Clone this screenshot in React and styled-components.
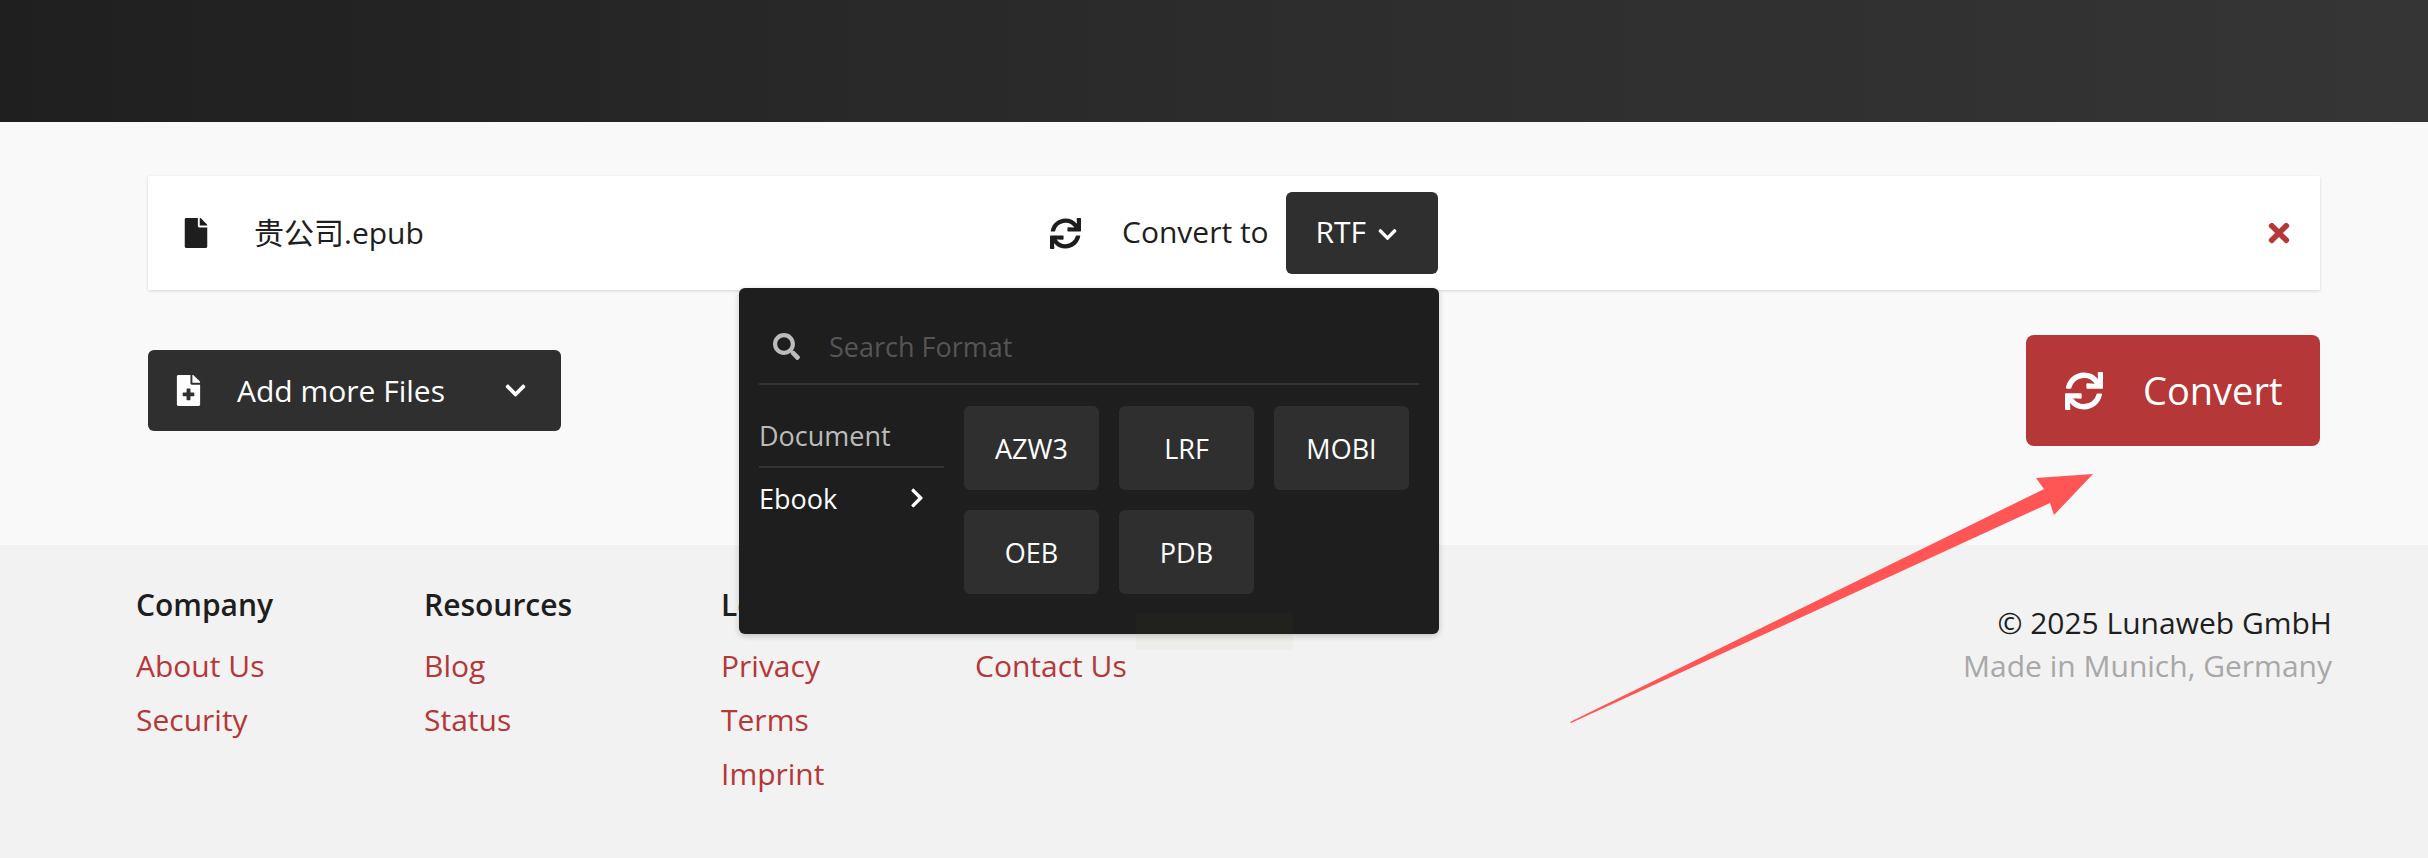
import React from "react";
import styled, { createGlobalStyle } from "styled-components";
import { FaFile, FaFileMedical, FaSync, FaChevronDown, FaChevronRight, FaSearch, FaTimes } from "react-icons/fa";

const Global = createGlobalStyle`
  html, body { margin: 0; padding: 0; }
  body {
    font-family: "Open Sans", "Noto Sans CJK SC", sans-serif;
    background: #f9f9f9;
    color: #1e1e1e;
    overflow: hidden;
  }
`;

const Page = styled.div`
  position: relative;
  width: 2428px;
  height: 858px;
  overflow: hidden;
  display: flex;
  flex-direction: column;
`;

const Header = styled.header`
  height: 122px;
  background: linear-gradient(90deg, #1f1f1f 0%, #2c2c2c 50%, #353535 100%);
`;

const Main = styled.main`
  height: 423px;
  padding: 54px 108px 0 148px;
  box-sizing: border-box;
  background: #f9f9f9;
`;

const FileRow = styled.div`
  display: flex;
  align-items: center;
  height: 114px;
  background: #fff;
  box-shadow: 0 1px 3px rgba(0, 0, 0, 0.14);
  padding: 0 26px 0 33px;
`;

const FileName = styled.div`
  display: flex;
  align-items: center;
  width: 869px;
  flex: none;
  gap: 43px;
  font-size: 30px;
  svg { font-size: 30px; flex: none; }
  span { padding-bottom: 5px; }
`;

const ConvertTo = styled.div`
  display: flex;
  align-items: center;
  font-size: 30px;
  > svg { font-size: 31px; margin-right: 41px; }
  > span { margin-right: 17px; padding-bottom: 4px; }
`;

const FormatButton = styled.button`
  display: flex;
  align-items: center;
  justify-content: center;
  gap: 11px;
  width: 152px;
  height: 82px;
  padding: 0 10px 3px 0;
  border: 0;
  border-radius: 6px;
  background: #2f2f2f;
  color: #fff;
  font: inherit;
  font-size: 30px;
  svg { font-size: 21px; margin-top: 5px; }
`;

const RemoveButton = styled.div`
  margin-left: auto;
  color: #b53737;
  font-size: 30px;
  line-height: 0;
`;

const Actions = styled.div`
  display: flex;
  justify-content: space-between;
  align-items: flex-start;
  margin-top: 45px;
`;

const AddButton = styled.button`
  display: flex;
  align-items: center;
  width: 413px;
  height: 81px;
  margin-top: 15px;
  padding: 0 34px 0 25px;
  box-sizing: border-box;
  border: 0;
  border-radius: 6px;
  background: #2f2f2f;
  color: #fff;
  font: inherit;
  font-size: 30px;
  > svg:first-child { font-size: 31px; margin-right: 33px; }
  > svg:last-child { font-size: 23px; margin-left: auto; }
`;

const ConvertButton = styled.button`
  display: flex;
  align-items: center;
  width: 294px;
  height: 111px;
  padding: 0 0 2px 39px;
  box-sizing: border-box;
  border: 0;
  border-radius: 8px;
  background: #b53737;
  color: #fff;
  font: inherit;
  font-size: 38px;
  svg { font-size: 38px; margin: 2px 40px 0 0; }
`;

const Menu = styled.div`
  position: absolute;
  left: 739px;
  top: 288px;
  width: 700px;
  height: 346px;
  padding: 0 20px;
  box-sizing: border-box;
  border-radius: 6px;
  background: #1e1e1e;
  box-shadow: 0 2px 6px rgba(0, 0, 0, 0.2);
  z-index: 2;
`;

const SearchRow = styled.div`
  display: flex;
  align-items: center;
  height: 97px;
  padding: 22px 0 0 14px;
  box-sizing: border-box;
  border-bottom: 2px solid #333;
  color: #555;
  font-size: 27px;
  svg { font-size: 27px; color: #bbb; margin-right: 29px; }
`;

const MenuBody = styled.div`
  display: flex;
  gap: 20px;
  padding-top: 21px;
`;

const Categories = styled.div`
  width: 185px;
  flex: none;
`;

const Category = styled.div`
  display: flex;
  align-items: center;
  justify-content: space-between;
  height: 62px;
  box-sizing: border-box;
  padding: 0 16px 2px 0;
  font-size: 27px;
  color: ${({ $active }) => ($active ? "#fff" : "#bbb")};
  border-bottom: ${({ $active }) => ($active ? "0" : "2px solid #333")};
  svg { font-size: 22px; }
`;

const Formats = styled.div`
  display: grid;
  grid-template-columns: repeat(3, 135px);
  grid-auto-rows: 84px;
  gap: 20px;
`;

const Format = styled.div`
  display: flex;
  align-items: center;
  justify-content: center;
  border-radius: 6px;
  background: #2f2f2f;
  color: #fff;
  font-size: 27px;
`;

const Footer = styled.footer`
  flex: 1;
  display: flex;
  justify-content: space-between;
  padding: 40px 96px 0 136px;
  background: #f2f2f2;
`;

const Columns = styled.div`
  display: flex;
`;

const Column = styled.div`
  width: ${({ $w }) => $w}px;
`;

const ColumnTitle = styled.div`
  font-size: 30px;
  font-weight: 600;
  line-height: 40px;
  margin-bottom: 14px;
`;

const FooterLink = styled.a`
  display: block;
  color: #b53737;
  font-size: 30px;
  line-height: 54px;
`;

const Legal = styled.div`
  padding-top: 17px;
  text-align: right;
  font-size: 30px;
  line-height: 42px;
  small { display: block; margin-top: 1px; font-size: inherit; color: #a8a8a8; }
`;

const GhostBadge = styled.div`
  position: absolute;
  left: 1136px;
  top: 613px;
  width: 157px;
  height: 37px;
  background: rgba(128, 128, 60, 0.04);
  z-index: 3;
`;

const Arrow = styled.svg`
  position: absolute;
  left: 0;
  top: 0;
  z-index: 3;
  pointer-events: none;
`;

const columns = [
  { title: "Company", w: 288, links: ["About Us", "Security"] },
  { title: "Resources", w: 297, links: ["Blog", "Status"] },
  { title: "Legal", w: 254, links: ["Privacy", "Terms", "Imprint"] },
  { title: "Support", w: 200, links: ["Contact Us"] },
];

export default function App() {
  return (
    <Page>
      <Global />
      <Header />
      <Main>
        <FileRow>
          <FileName>
            <FaFile />
            <span>贵公司.epub</span>
          </FileName>
          <ConvertTo>
            <FaSync />
            <span>Convert to</span>
            <FormatButton>RTF <FaChevronDown /></FormatButton>
          </ConvertTo>
          <RemoveButton><FaTimes /></RemoveButton>
        </FileRow>
        <Actions>
          <AddButton>
            <FaFileMedical />
            Add more Files
            <FaChevronDown />
          </AddButton>
          <ConvertButton>
            <FaSync />
            Convert
          </ConvertButton>
        </Actions>
      </Main>
      <Menu>
        <SearchRow>
          <FaSearch />
          Search Format
        </SearchRow>
        <MenuBody>
          <Categories>
            <Category>Document</Category>
            <Category $active>Ebook <FaChevronRight /></Category>
          </Categories>
          <Formats>
            {["AZW3", "LRF", "MOBI", "OEB", "PDB"].map((f) => (
              <Format key={f}>{f}</Format>
            ))}
          </Formats>
        </MenuBody>
      </Menu>
      <GhostBadge />
      <Footer>
        <Columns>
          {columns.map((c) => (
            <Column key={c.title} $w={c.w}>
              <ColumnTitle>{c.title}</ColumnTitle>
              {c.links.map((l) => (
                <FooterLink key={l}>{l}</FooterLink>
              ))}
            </Column>
          ))}
        </Columns>
        <Legal>
          © 2025 Lunaweb GmbH
          <small>Made in Munich, Germany</small>
        </Legal>
      </Footer>
      <Arrow width="2428" height="858" viewBox="0 0 2428 858">
        <polygon points="1570,722 2044,489 2036,478 2093,474 2054,515 2050,503 1571,723" fill="#ff5555" />
      </Arrow>
    </Page>
  );
}
